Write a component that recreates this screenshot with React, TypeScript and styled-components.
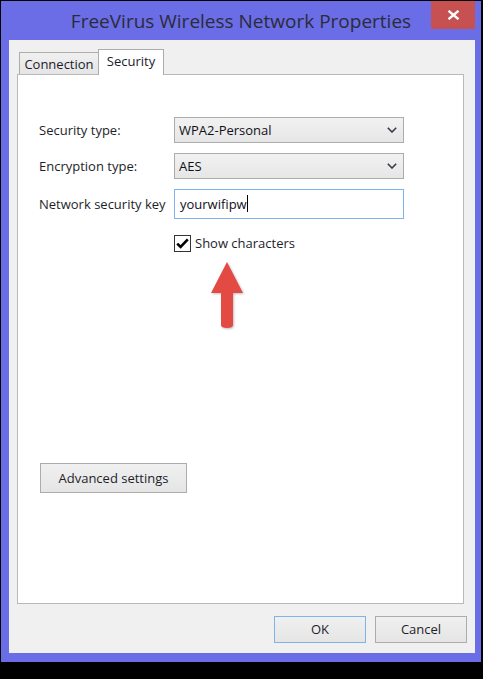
import React from "react";
import styled, { createGlobalStyle, css } from "styled-components";

const Global = createGlobalStyle`
  html, body { margin: 0; padding: 0; background: #000; }
  body { width: 483px; height: 679px; overflow: hidden; font-family: "Open Sans", "Noto Sans", sans-serif; }
  * { box-sizing: border-box; }
`;

const Window = styled.div`
  margin: 1px 0 0 1px;
  width: 480px;
  height: 661px;
  background: #6a6de5;
  padding: 0 6px 9px 8px;
  display: flex;
  flex-direction: column;
`;

const TitleBar = styled.div`
  position: relative;
  height: 39px;
  margin: 0 -6px 0 -8px;
  display: flex;
  align-items: center;
  justify-content: center;
`;

const Title = styled.div`
  font-family: "Open Sans", "Noto Sans", sans-serif;
  font-size: 19px;
  color: #2b2b3a;
  padding-top: 1px;
  letter-spacing: 0px;
`;

const CloseButton = styled.div`
  position: absolute;
  top: 0;
  right: 6px;
  width: 44px;
  height: 28px;
  background: #c75050;
  display: flex;
  align-items: center;
  justify-content: center;
`;

const Client = styled.div`
  flex: 1;
  background: #f0f0f0;
  padding: 9px 8px 10px 8px;
  display: flex;
  flex-direction: column;
`;

const TabStrip = styled.div`
  height: 25px;
  padding-left: 2px;
  display: flex;
  align-items: flex-end;
`;

const Tab = styled.div<{ $active?: boolean }>`
  font-size: 13px;
  color: #1b1b2b;
  display: flex;
  align-items: center;
  justify-content: center;
  border: 1px solid #acacac;
  border-bottom: none;
  ${(p) =>
    p.$active
      ? css`
          height: 26px;
          width: 66px;
          margin-bottom: -1px;
          margin-left: -1px;
          background: #fff;
          position: relative;
          z-index: 1;
          padding-bottom: 3px;
        `
      : css`
          height: 22px;
          width: 80px;
          background: linear-gradient(#f0f0f0, #e5e5e5);
          padding-top: 1px;
        `}
`;

const Panel = styled.div`
  position: relative;
  height: 530px;
  margin-right: 3px;
  background: #fff;
  border: 1px solid #b9b9b9;
  padding: 42px 0 0 21px;
  display: flex;
  flex-direction: column;
  align-items: flex-start;
`;

const Form = styled.div`
  display: grid;
  grid-template-columns: 135px 230px;
  grid-auto-rows: auto;
  row-gap: 10px;
  align-items: center;
`;

const Label = styled.div`
  font-size: 13px;
  color: #1e1e2a;
`;

const Select = styled.div`
  height: 26px;
  border: 1px solid #acacac;
  background: linear-gradient(#f2f2f2, #e6e6e6);
  display: flex;
  align-items: center;
  justify-content: space-between;
  padding: 0 6px 1px 4px;
  font-size: 13px;
  color: #101018;
`;

const TextBox = styled.div`
  height: 30px;
  border: 1px solid #7eb4ea;
  background: #fff;
  display: flex;
  align-items: center;
  padding: 0 0 1px 5px;
  font-size: 13px;
  color: #101018;
`;

const Caret = styled.span`
  display: inline-block;
  width: 1px;
  height: 17px;
  background: #000;
  margin-left: 0px;
  vertical-align: middle;
`;

const CheckRow = styled.label`
  margin: 15px 0 0 135px;
  display: flex;
  align-items: center;
  gap: 4px;
  font-size: 13px;
  color: #1e1e2a;
`;

const CheckBox = styled.span`
  width: 17px;
  height: 17px;
  border: 1px solid #333;
  background: #fff;
  display: flex;
  align-items: center;
  justify-content: center;
`;

const Arrow = styled.svg`
  position: absolute;
  left: 192px;
  top: 186px;
  filter: drop-shadow(1px 1px 1px rgba(0, 0, 0, 0.25));
`;

const AdvancedButton = styled.div`
  margin: 211px 0 0 1px;
  width: 147px;
  height: 30px;
  border: 1px solid #acacac;
  background: linear-gradient(#f0f0f0, #e5e5e5);
  display: flex;
  align-items: center;
  justify-content: center;
  font-size: 13px;
  color: #1e1e2a;
  padding-bottom: 1px;
`;

const ButtonRow = styled.div`
  margin-top: 12px;
  display: flex;
  justify-content: flex-end;
  gap: 9px;
`;

const DialogButton = styled.div<{ $default?: boolean }>`
  width: 92px;
  height: 27px;
  border: 1px solid ${(p) => (p.$default ? "#7eb4ea" : "#acacac")};
  background: linear-gradient(#f0f0f0, #e5e5e5);
  display: flex;
  align-items: center;
  justify-content: center;
  font-size: 13px;
  color: #1e1e2a;
  padding-bottom: 1px;
`;

const Chevron = () => (
  <svg width="10" height="6" viewBox="0 0 10 6">
    <path d="M0.8 0.8 L5 5 L9.2 0.8" fill="none" stroke="#3a3a4a" strokeWidth="1.6" />
  </svg>
);

export default function App() {
  return (
    <>
      <Global />
      <Window>
        <TitleBar>
          <Title>FreeVirus Wireless Network Properties</Title>
          <CloseButton>
            <svg width="13" height="10" viewBox="0 0 13 10">
              <path d="M1.5 0.8 L11.5 9.2 M11.5 0.8 L1.5 9.2" stroke="#fff" strokeWidth="2.4" />
            </svg>
          </CloseButton>
        </TitleBar>
        <Client>
          <TabStrip>
            <Tab>Connection</Tab>
            <Tab $active>Security</Tab>
          </TabStrip>
          <Panel>
            <Form>
              <Label>Security type:</Label>
              <Select>
                <span>WPA2-Personal</span>
                <Chevron />
              </Select>
              <Label>Encryption type:</Label>
              <Select>
                <span>AES</span>
                <Chevron />
              </Select>
              <Label>Network security key</Label>
              <TextBox>
                <span>yourwifipw</span>
                <Caret />
              </TextBox>
            </Form>
            <CheckRow>
              <CheckBox>
                <svg width="13" height="11" viewBox="0 0 13 11">
                  <path d="M1.2 5.6 L4.6 9 L11.8 1.4" fill="none" stroke="#000" strokeWidth="2.6" />
                </svg>
              </CheckBox>
              Show characters
            </CheckRow>
            <Arrow width="34" height="69" viewBox="0 0 34 69">
              <path
                d="M17 1 L33 32 L23 32 L23 64 Q23 67 17 67 Q11 67 11 64 L11 32 L1 32 Z"
                fill="#e24a43"
              />
            </Arrow>
            <AdvancedButton>Advanced settings</AdvancedButton>
          </Panel>
          <ButtonRow>
            <DialogButton $default>OK</DialogButton>
            <DialogButton>Cancel</DialogButton>
          </ButtonRow>
        </Client>
      </Window>
    </>
  );
}
